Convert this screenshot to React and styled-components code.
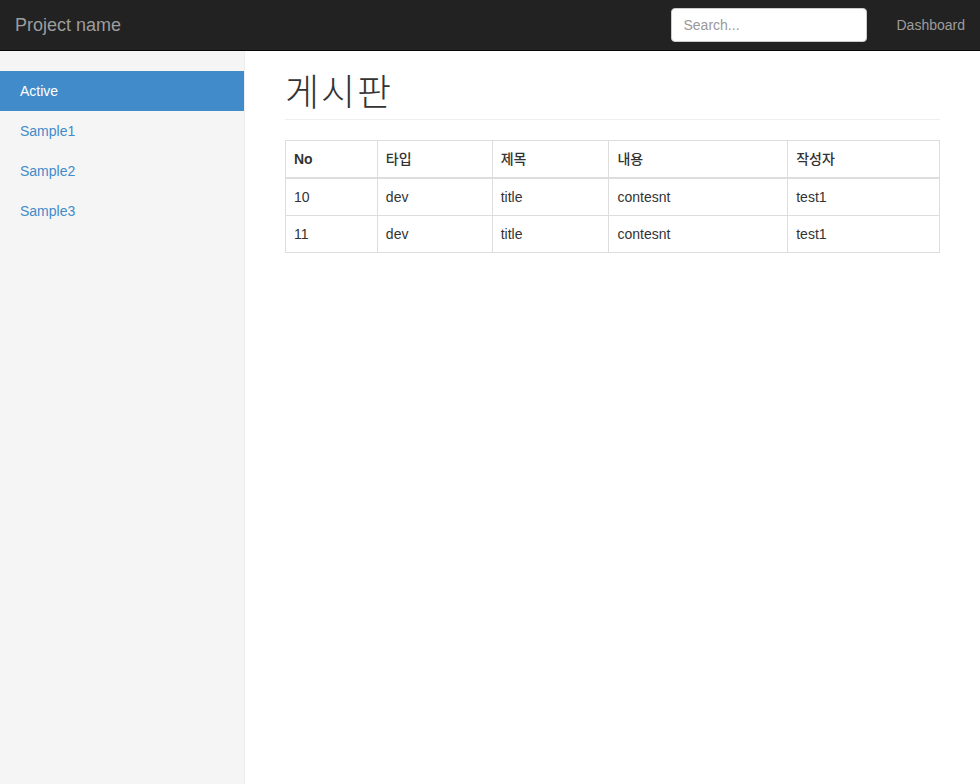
import React from "react";
import styled, { createGlobalStyle } from "styled-components";

const Global = createGlobalStyle`
  * { box-sizing: border-box; }
  html, body { margin: 0; padding: 0; }
  body {
    font-family: "Liberation Sans", Arial, "Noto Sans CJK KR", sans-serif;
    font-size: 14px;
    line-height: 1.42857;
    color: #333;
    background: #fff;
  }
`;

const Page = styled.div`
  display: flex;
  flex-direction: column;
  height: 784px;
`;

const Navbar = styled.nav`
  height: 50px;
  background: #222;
  border-bottom: 1px solid #080808;
  display: flex;
  align-items: center;
  padding: 0 15px;
  flex-shrink: 0;
  box-sizing: content-box;
`;

const Brand = styled.a`
  font-size: 18px;
  line-height: 20px;
  color: #9d9d9d;
  text-decoration: none;
  margin-right: auto;
  margin-top: -1px;
`;

const SearchInput = styled.input`
  width: 196px;
  height: 34px;
  padding: 6px 12px;
  font-family: inherit;
  font-size: 14px;
  color: #555;
  background: #fff;
  border: 1px solid #ccc;
  border-radius: 4px;
  margin-top: -1px;
  &::placeholder { color: #999; }
`;

const NavLink = styled.a`
  color: #9d9d9d;
  text-decoration: none;
  padding: 15px 0 15px 30px;
  line-height: 20px;
  margin-top: -1px;
`;

const Body = styled.div`
  flex: 1;
  display: flex;
  min-height: 0;
`;

const Sidebar = styled.aside`
  width: 245px;
  flex-shrink: 0;
  background: #f5f5f5;
  border-right: 1px solid #eee;
  padding-top: 20px;
  overflow: hidden;
`;

const SideList = styled.ul`
  list-style: none;
  margin: 0;
  padding: 0;
`;

const SideItem = styled.li`
  a {
    display: block;
    padding: 10px 20px;
    line-height: 20px;
    text-decoration: none;
    color: ${(p) => (p.$active ? "#fff" : "#428bca")};
    background: ${(p) => (p.$active ? "#428bca" : "transparent")};
  }
`;

const Main = styled.main`
  flex: 1;
  padding: 19px 40px 20px 40px;
`;

const PageHeader = styled.h1`
  margin: 0 0 20px;
  padding-bottom: 9px;
  border-bottom: 1px solid #eee;
  font-family: "Noto Sans CJK KR", "Liberation Sans", sans-serif;
  font-size: 37px;
  font-weight: 300;
  letter-spacing: 2px;
  line-height: 40px;
  color: #333;
`;

const Table = styled.table`
  width: 100%;
  border-collapse: collapse;
  border: 1px solid #ddd;
  font-family: "Liberation Sans", Arial, "Noto Sans CJK KR", sans-serif;
`;

const Th = styled.th`
  text-align: left;
  padding: 8px;
  line-height: 20px;
  border: 1px solid #ddd;
  border-bottom: 2px solid #ddd;
  font-weight: ${(p) => (p.$kr ? 500 : 700)};
  width: ${(p) => p.$w}px;
`;

const Td = styled.td`
  padding: 8px;
  line-height: 20px;
  border: 1px solid #ddd;
`;

const columns = [
  { label: "No", w: 92 },
  { label: "타입", w: 115, kr: true },
  { label: "제목", w: 117, kr: true },
  { label: "내용", w: 179, kr: true },
  { label: "작성자", w: 152, kr: true },
];

const rows = [
  ["10", "dev", "title", "contesnt", "test1"],
  ["11", "dev", "title", "contesnt", "test1"],
];

export default function App() {
  return (
    <Page>
      <Global />
      <Navbar>
        <Brand href="#">Project name</Brand>
        <SearchInput placeholder="Search..." />
        <NavLink href="#">Dashboard</NavLink>
      </Navbar>
      <Body>
        <Sidebar>
          <SideList>
            <SideItem $active><a href="#">Active</a></SideItem>
            <SideItem><a href="#">Sample1</a></SideItem>
            <SideItem><a href="#">Sample2</a></SideItem>
            <SideItem><a href="#">Sample3</a></SideItem>
          </SideList>
        </Sidebar>
        <Main>
          <PageHeader>게시판</PageHeader>
          <Table>
            <thead>
              <tr>
                {columns.map((c) => (
                  <Th key={c.label} $w={c.w} $kr={c.kr}>{c.label}</Th>
                ))}
              </tr>
            </thead>
            <tbody>
              {rows.map((r, i) => (
                <tr key={i}>
                  {r.map((v, j) => (
                    <Td key={j}>{v}</Td>
                  ))}
                </tr>
              ))}
            </tbody>
          </Table>
        </Main>
      </Body>
    </Page>
  );
}
